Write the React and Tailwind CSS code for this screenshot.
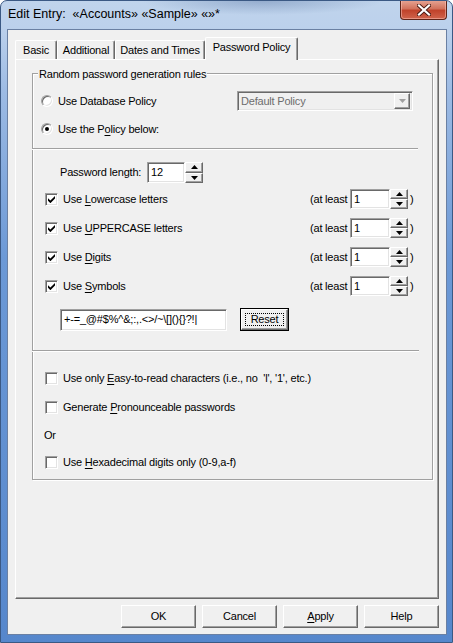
import React from "react";

const sunken =
  "border border-t-[#a0a0a0] border-l-[#a0a0a0] border-b-white border-r-white shadow-[inset_1px_1px_0_#696969,inset_-1px_-1px_0_#e3e3e3]";
const raised =
  "border border-t-white border-l-white border-b-[#696969] border-r-[#696969] shadow-[inset_-1px_-1px_0_#a0a0a0]";

const Arrow = ({ up, color = "#000" }) => (
  <svg width="7" height="4" viewBox="0 0 7 4">
    {up ? <path d="M3.5 0L7 4H0z" fill={color} /> : <path d="M0 0h7L3.5 4z" fill={color} />}
  </svg>
);

const Spin = () => (
  <div className="flex flex-col w-[18px] h-full">
    <div className={`${raised} flex-1 bg-[#f0f0f0] flex items-center justify-center`}>
      <Arrow up />
    </div>
    <div className={`${raised} flex-1 bg-[#f0f0f0] flex items-center justify-center`}>
      <Arrow />
    </div>
  </div>
);

const Check = ({ checked }) => (
  <span className={`w-[13px] h-[13px] bg-white ${sunken} flex items-center justify-center shrink-0`}>
    {checked && (
      <svg width="7" height="7" viewBox="0 0 7 7">
        <path d="M0 2.2L2.4 4.6L7 0V2.6L2.4 7.2L0 4.8Z" fill="#000" />
      </svg>
    )}
  </span>
);

const Radio = ({ on }) => (
  <span className="w-[12px] h-[12px] rounded-full bg-white border border-t-[#a0a0a0] border-l-[#a0a0a0] border-b-white border-r-white shadow-[inset_1px_1px_0_#696969,inset_-1px_-1px_0_#e3e3e3] flex items-center justify-center shrink-0">
    {on && <span className="w-[4px] h-[4px] rounded-full bg-black" />}
  </span>
);

const U = ({ children }) => <span className="underline underline-offset-[2px]">{children}</span>;

const CountRow = ({ label, mt }) => (
  <div className={`flex items-center h-[20px] ${mt}`}>
    <div className="w-[277px] flex items-center pl-[12px] gap-[5px]">
      <Check checked />
      <span>{label}</span>
    </div>
    <span className="w-[40px]">(at least</span>
    <div className={`w-[40px] h-[20px] bg-white ${sunken} pl-[3px] flex items-center`}>1</div>
    <Spin />
    <span className="ml-[2px]">)</span>
  </div>
);

const OptRow = ({ children, mt }) => (
  <div className={`flex items-center h-[16px] pl-[12px] gap-[5px] ${mt}`}>
    <Check />
    <span>{children}</span>
  </div>
);

const tabs = [
  { name: "Basic", w: "w-[42px]" },
  { name: "Additional", w: "w-[58px]" },
  { name: "Dates and Times", w: "w-[90px]" },
];

export default function App() {
  return (
    <div className="w-[453px] h-[643px] flex flex-col border border-[#3b5984] rounded-t-[7px] overflow-hidden bg-[linear-gradient(180deg,#c0d4ec_0%,#bcd1ec_4%,#9dbbe4_14%,#6c99d6_40%,#5687cc_100%)] font-['Liberation_Sans',Arial,sans-serif] text-[11px] tracking-[-0.2px] text-black select-none">
      {/* title bar */}
      <div className="relative h-[28px] flex items-center pl-[7px] bg-[radial-gradient(ellipse_120px_14px_at_58%_0%,rgba(70,100,150,0.35),transparent)]">
        <span className="text-[12.5px] tracking-normal pb-[1px]">Edit Entry:&nbsp;&nbsp;«Accounts» «Sample» «»*</span>
        <div className="absolute right-[5px] -top-[1px] w-[47px] h-[20px] rounded-b-[4px] border border-t-0 border-[#5e2418] bg-[linear-gradient(180deg,#e8a796_0%,#d2735d_45%,#c0432b_55%,#d0644c_100%)] shadow-[inset_0_0_0_1px_rgba(255,200,190,0.5)] flex items-center justify-center">
          <svg width="14" height="12" viewBox="0 0 14 12">
            <path d="M2 1.5L12 10.5M12 1.5L2 10.5" stroke="#4a1a12" strokeWidth="4" strokeLinecap="square" />
            <path d="M2 1.5L12 10.5M12 1.5L2 10.5" stroke="#fff" strokeWidth="2.2" strokeLinecap="square" />
          </svg>
        </div>
      </div>

      {/* client area */}
      <div className="ml-[6px] mr-[5px] h-[606px] border border-[#6a80a3] bg-[#f0f0f0] flex flex-col px-[7px] pt-[7px]">
        {/* tabs */}
        <div className="flex items-end h-[22px]">
          {tabs.map((t) => (
            <div
              key={t.name}
              className={`${t.w} h-[19px] border-t border-l border-white border-r border-r-[#696969] shadow-[inset_-1px_0_0_#a0a0a0] rounded-t-[2px] flex items-center justify-center`}
            >
              {t.name}
            </div>
          ))}
          <div className="relative z-10 w-[93px] h-[23px] -mb-[1px] bg-[#f0f0f0] border-t border-l border-white border-r border-r-[#696969] shadow-[inset_-1px_0_0_#a0a0a0] rounded-t-[2px] flex items-center justify-center pb-[4px]">
            Password Policy
          </div>
        </div>

        {/* tab panel */}
        <div className="h-[540px] border border-t-white border-l-white border-r-[#696969] border-b-[#696969] shadow-[inset_-1px_-1px_0_#a0a0a0]">
          <div className="relative ml-[16px] mt-[13px] w-[401px] h-[407px] border border-[#a0a0a0] shadow-[inset_1px_1px_0_#fff,1px_1px_0_#fff] flex flex-col">
            <span className="absolute -top-[8px] left-[5px] bg-[#f0f0f0] px-[1px]">Random password generation rules</span>

            <div className="flex items-center h-[20px] mt-[17px] pl-[8px]">
              <Radio />
              <span className="ml-[5px]">Use Database Policy</span>
              <div className={`ml-auto mr-[19px] w-[176px] h-[20px] ${sunken} bg-[#f0f0f0] flex items-center pl-[3px] pr-[2px]`}>
                <span className="flex-1 text-[#6d6d6d]">Default Policy</span>
                <div className={`w-[16px] h-[16px] ${raised} bg-[#f0f0f0] flex items-center justify-center`}>
                  <Arrow color="#a0a0a0" />
                </div>
              </div>
            </div>

            <div className="flex items-center h-[20px] mt-[8px] pl-[8px]">
              <Radio on />
              <span className="ml-[5px]">
                Use the P<U>o</U>licy below:
              </span>
            </div>

            <div className="mt-[9px] -ml-[1px] w-[386px] h-[2px] border-t border-[#a0a0a0] border-b border-b-white" />

            <div className="flex items-center h-[21px] mt-[12px] pl-[27px]">
              <span className="w-[87px]">Password length:</span>
              <div className={`w-[38px] h-[21px] bg-white ${sunken} pl-[3px] flex items-center`}>12</div>
              <Spin />
            </div>

            <CountRow mt="mt-[6px]" label={<>Use <U>L</U>owercase letters</>} />
            <CountRow mt="mt-[9px]" label={<>Use <U>U</U>PPERCASE letters</>} />
            <CountRow mt="mt-[9px]" label={<>Use <U>D</U>igits</>} />
            <CountRow mt="mt-[9px]" label={<>Use <U>S</U>ymbols</>} />

            <div className="flex items-center h-[23px] mt-[12px] pl-[27px]">
              <div className={`w-[167px] h-[22px] bg-white ${sunken} pl-[3px] flex items-center whitespace-nowrap overflow-hidden`}>
                {"+-=_@#$%^&;:,.<>/~\\[](){}?!|"}
              </div>
              <div className="ml-[13px] w-[49px] h-[23px] border border-black">
                <div className={`w-full h-full ${raised} bg-[#f0f0f0] flex items-center justify-center p-[3px]`}>
                  <span className="w-full h-full border border-dotted border-black flex items-center justify-center">Reset</span>
                </div>
              </div>
            </div>

            <div className="mt-[19px] -ml-[1px] w-[387px] h-[2px] border-t border-[#a0a0a0] border-b border-b-white" />

            <OptRow mt="mt-[18px]">
              Use only <U>E</U>asy-to-read characters (i.e., no &nbsp;'l', '1', etc.)
            </OptRow>
            <OptRow mt="mt-[13px]">
              Generate <U>P</U>ronounceable passwords
            </OptRow>
            <div className="h-[16px] mt-[12px] pl-[11px] flex items-center">Or</div>
            <OptRow mt="mt-[11px]">
              Use <U>H</U>exadecimal digits only (0-9,a-f)
            </OptRow>
          </div>
        </div>

        {/* dialog buttons */}
        <div className="flex justify-end gap-[6px] mt-[6px]">
          {[
            { k: "ok", l: "OK" },
            { k: "cancel", l: "Cancel" },
            { k: "apply", l: <><U>A</U>pply</> },
            { k: "help", l: "Help" },
          ].map((b) => (
            <div key={b.k} className={`w-[75px] h-[23px] ${raised} bg-[#f0f0f0] flex items-center justify-center`}>
              {b.l}
            </div>
          ))}
        </div>
      </div>
    </div>
  );
}
